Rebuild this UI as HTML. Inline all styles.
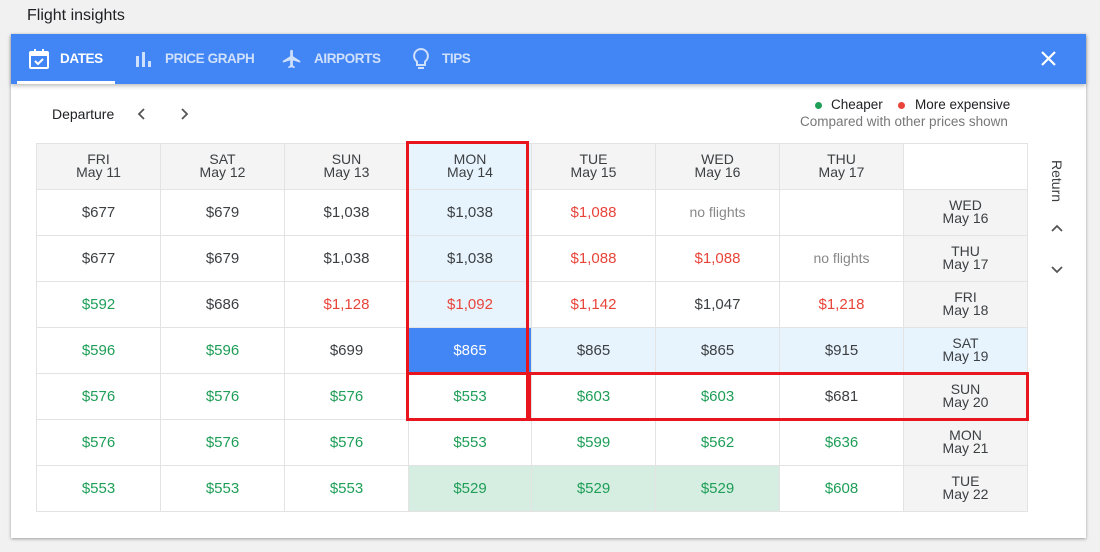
<!DOCTYPE html><html><head><style>
body{margin:0;width:1100px;height:552px;background:#f1f1f1;font-family:"Liberation Sans",Roboto,sans-serif;position:relative;overflow:hidden;color:#3c4043}
.title{position:absolute;left:27px;top:7px;font-size:16px;color:#202124}
.card{position:absolute;left:11px;top:34px;width:1075px;height:504px;background:#fff;box-shadow:0 1px 3px rgba(0,0,0,.35)}
.bar{position:absolute;left:11px;top:34px;width:1075px;height:50px;background:#4285f4;box-shadow:0 2px 4px rgba(0,0,0,.25)}
.tab{position:absolute;top:51px;color:#cfe0fc;font-size:13.5px;font-weight:bold;letter-spacing:-.4px}
.grid{position:absolute;left:36px;top:143px;display:grid;grid-template-columns:123px 123px 123px 122px 123px 123px 123px 123px;grid-auto-rows:45px;gap:1px;background:#e3e3e3;border:1px solid #e3e3e3}
.grid div{background:#fff;display:flex;align-items:center;justify-content:center;text-align:center;font-size:15px;color:#3c4043;line-height:13px}
.grid .h{background:#f4f4f4;font-size:14px;padding-bottom:2px;box-sizing:border-box}
.g{color:#1e9e57!important}.r{color:#e8443a!important}.n{color:#888!important;font-size:14px!important}
.b{background:#e8f4fd!important}.s{background:#4285f4!important;color:#fff!important}.gg{background:#d5eee1!important}
.red{position:absolute;border:3px solid #e8141e;box-sizing:border-box}
</style></head><body>
<div class="title">Flight insights</div>
<div class="card"></div>
<div class="bar"></div>
<div style="position:absolute;left:17px;top:81px;width:98px;height:3px;background:#fff"></div>
<svg style="position:absolute;left:28px;top:48px" width="22" height="22" viewBox="0 0 22 22"><rect x="2" y="4" width="18" height="16" rx="1" fill="none" stroke="#fff" stroke-width="2"/><rect x="2" y="4" width="18" height="4" fill="#fff"/><rect x="6" y="1" width="2" height="4" fill="#fff"/><rect x="14" y="1" width="2" height="4" fill="#fff"/><path d="M7 13l3 3 5-5" fill="none" stroke="#fff" stroke-width="2"/></svg>
<div class="tab" style="left:60px;color:#fff">DATES</div>
<svg style="position:absolute;left:135px;top:50px" width="18" height="18"><rect x="1" y="6" width="3" height="11" fill="#cfe0fc"/><rect x="7" y="2" width="3" height="15" fill="#cfe0fc"/><rect x="13" y="11" width="3" height="6" fill="#cfe0fc"/></svg>
<div class="tab" style="left:165px">PRICE GRAPH</div>
<svg style="position:absolute;left:281px;top:48px" width="22" height="22" viewBox="0 0 24 24"><path d="M21 16v-2l-8-5V3.5a1.5 1.5 0 0 0-3 0V9l-8 5v2l8-2.5V19l-2 1.5V22l3.5-1 3.5 1v-1.5L13 19v-5.5z" fill="#cfe0fc"/></svg>
<div class="tab" style="left:314px">AIRPORTS</div>
<svg style="position:absolute;left:411px;top:47px" width="20" height="24" viewBox="0 0 20 24"><path d="M10 2a7 7 0 0 0-4 12.7V18h8v-3.3A7 7 0 0 0 10 2z" fill="none" stroke="#cfe0fc" stroke-width="2"/><rect x="7" y="20" width="6" height="2" fill="#cfe0fc"/></svg>
<div class="tab" style="left:442px">TIPS</div>
<svg style="position:absolute;left:1040px;top:50px" width="17" height="17"><path d="M2 2l13 13M15 2L2 15" stroke="#fff" stroke-width="2.2"/></svg>
<div style="position:absolute;left:52px;top:106px;font-size:14px;color:#202124">Departure</div>
<svg style="position:absolute;left:136px;top:107px" width="12" height="14"><path d="M8 2L3 7l5 5" fill="none" stroke="#555" stroke-width="1.8"/></svg>
<svg style="position:absolute;left:178px;top:107px" width="12" height="14"><path d="M4 2l5 5-5 5" fill="none" stroke="#555" stroke-width="1.8"/></svg>
<div style="position:absolute;left:815px;top:102px;width:7px;height:7px;border-radius:50%;background:#1e9e57"></div>
<div style="position:absolute;left:831px;top:97px;font-size:13.5px;color:#202124">Cheaper</div>
<div style="position:absolute;left:898px;top:102px;width:7px;height:7px;border-radius:50%;background:#e8443a"></div>
<div style="position:absolute;left:915px;top:97px;font-size:13.5px;color:#202124">More expensive</div>
<div style="position:absolute;left:800px;top:114px;font-size:13.5px;color:#777">Compared with other prices shown</div>
<div style="position:absolute;left:1049px;top:160px;font-size:14px;writing-mode:vertical-rl;color:#3c4043">Return</div>
<svg style="position:absolute;left:1050px;top:223px" width="14" height="10"><path d="M2 8l5-5 5 5" fill="none" stroke="#555" stroke-width="1.8"/></svg>
<svg style="position:absolute;left:1050px;top:265px" width="14" height="10"><path d="M2 2l5 5 5-5" fill="none" stroke="#555" stroke-width="1.8"/></svg>
<div class="grid">
<div class="h">FRI<br>May 11</div><div class="h">SAT<br>May 12</div><div class="h">SUN<br>May 13</div><div class="h b">MON<br>May 14</div><div class="h">TUE<br>May 15</div><div class="h">WED<br>May 16</div><div class="h">THU<br>May 17</div><div></div>
<div>$677</div><div>$679</div><div>$1,038</div><div class="b">$1,038</div><div class="r">$1,088</div><div class="n">no flights</div><div></div><div class="h">WED<br>May 16</div>
<div>$677</div><div>$679</div><div>$1,038</div><div class="b">$1,038</div><div class="r">$1,088</div><div class="r">$1,088</div><div class="n">no flights</div><div class="h">THU<br>May 17</div>
<div class="g">$592</div><div>$686</div><div class="r">$1,128</div><div class="b r">$1,092</div><div class="r">$1,142</div><div>$1,047</div><div class="r">$1,218</div><div class="h">FRI<br>May 18</div>
<div class="g">$596</div><div class="g">$596</div><div>$699</div><div class="s">$865</div><div class="b">$865</div><div class="b">$865</div><div class="b">$915</div><div class="h b">SAT<br>May 19</div>
<div class="g">$576</div><div class="g">$576</div><div class="g">$576</div><div class="g">$553</div><div class="g">$603</div><div class="g">$603</div><div>$681</div><div class="h">SUN<br>May 20</div>
<div class="g">$576</div><div class="g">$576</div><div class="g">$576</div><div class="g">$553</div><div class="g">$599</div><div class="g">$562</div><div class="g">$636</div><div class="h">MON<br>May 21</div>
<div class="g">$553</div><div class="g">$553</div><div class="g">$553</div><div class="g gg">$529</div><div class="g gg">$529</div><div class="g gg">$529</div><div class="g">$608</div><div class="h">TUE<br>May 22</div>
</div>
<div class="red" style="left:406px;top:141px;width:123px;height:234px"></div>
<div class="red" style="left:406px;top:372px;width:123px;height:49px"></div>
<div class="red" style="left:528px;top:372px;width:501px;height:49px"></div>
</body></html>
